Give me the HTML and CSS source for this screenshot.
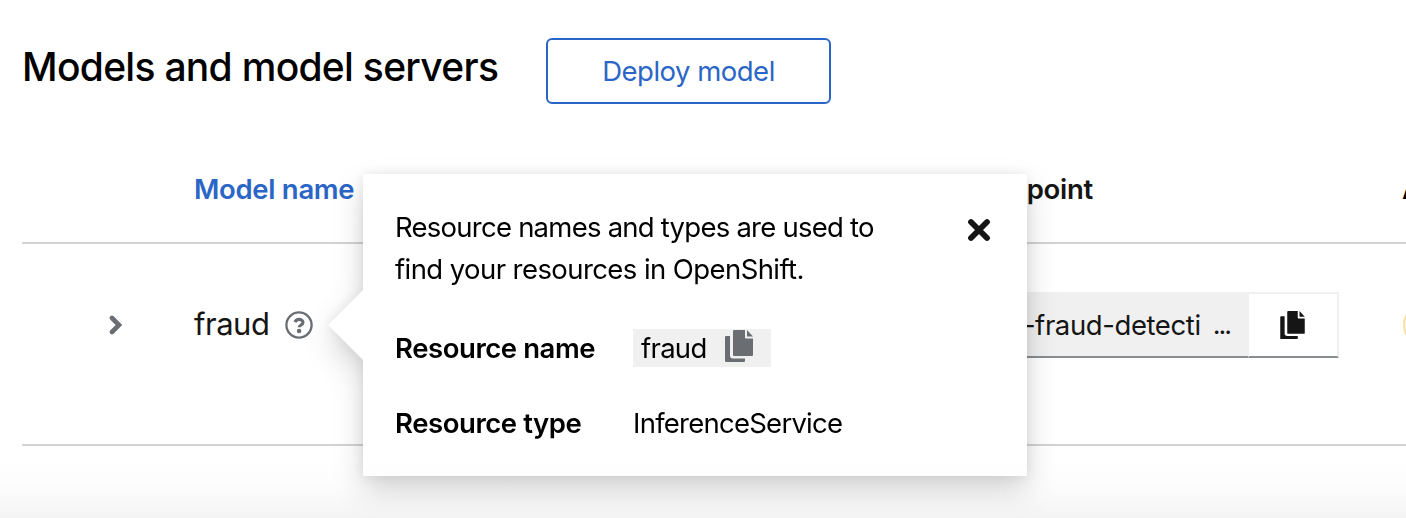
FILE: index.html
```html
<!DOCTYPE html>
<html lang="en">
<head>
<meta charset="utf-8">
<title>Models and model servers</title>
<link rel="stylesheet" href="styles.css">
</head>
<body>
<svg class="symbols" aria-hidden="true">
  <symbol id="copy" viewBox="0 0 28 32">
    <path d="M5 6v19.500a3 3 0 0 0 3 3h12V31a1 1 0 0 1-1 1H1a1 1 0 0 1-1-1V7a1 1 0 0 1 1-1zM9 0h11v7.500a1 1 0 0 0 1 1h7V25a1 1 0 0 1-1 1H9a1 1 0 0 1-1-1V1a1 1 0 0 1 1-1zM22 0l6 6.500h-6z"/>
  </symbol>
</svg>
<main class="page">
  <header class="toolbar">
    <h1 class="title"><span>Models and model servers</span></h1>
    <button class="deploy"><span>Deploy model</span></button>
  </header>
  <section class="table">
    <div class="row head">
      <div class="cell name sort"><span>Model name</span></div>
      <div class="cell endpoint-title"><span>Inference endpoint</span></div>
      <div class="cell api"><span>API protocol</span></div>
    </div>
    <div class="row model">
      <div class="cell toggle">
        <svg width="14" height="20" viewBox="0 0 14 20"><path d="M3 3l7 7-7 7" fill="none" stroke="#6a6e73" stroke-width="4.600" stroke-linecap="round" stroke-linejoin="miter"/></svg>
      </div>
      <div class="cell name model-name"><span class="model-text">fraud</span>
        <div class="help">
          <svg width="28" height="28" viewBox="0 0 28 28"><circle cx="14" cy="14" r="12.600" fill="none" stroke="#6a6e73" stroke-width="2.300"/><path d="M10 11.200c.8-1.900 2.200-2.800 4-2.800 2.200 0 4 1.200 4 3.100 0 2.500-3.800 2.400-3.800 4.700" fill="none" stroke="#6a6e73" stroke-width="3.100"/><circle cx="14.100" cy="20" r="2.300" fill="#6a6e73"/></svg>
          <aside class="popover">
            <svg class="arrow" width="36" height="72" viewBox="0 0 36 72"><path d="M36 0L0 36l36 36z" fill="#fff"/></svg>
            <div class="pop-body">
              <p class="pop-text"><span class="line1">Resource names and types are used to</span><br><span class="line2">find your resources in OpenShift.</span></p>
              <dl class="details">
                <dt><span>Resource name</span></dt>
                <dd><div class="clip"><span class="clip-text">fraud</span><svg width="28" height="32"><use href="#copy"/></svg></div></dd>
                <dt><span>Resource type</span></dt>
                <dd><span class="svc">InferenceService</span></dd>
              </dl>
              <svg class="close" width="24" height="24" viewBox="0 0 24 24"><path d="M4 4l16 16M20 4L4 20" stroke="#151515" stroke-width="5.800" stroke-linecap="round"/></svg>
            </div>
          </aside>
        </div>
      </div>
      <div class="cell endpoint">
        <div class="field"><span class="url">-fraud-detecti</span><span class="dots">...</span></div>
        <button class="copy"><svg width="25" height="28"><use href="#copy"/></svg></button>
      </div>
      <div class="cell api"><span class="badge">REST</span></div>
    </div>
  </section>
  <div class="fade"></div>
</main>
</body>
</html>
```
FILE: styles.css
```css
* { box-sizing: border-box; }
body {
  margin: 0;
  background: #fff;
  color: #151515;
  font: 28px/42px Inter, sans-serif;
  overflow: hidden;
}
h1, p, dl, dd { margin: 0; }
svg { display: block; flex: none; }
button { font: inherit; }
span { white-space: nowrap; }
.symbols { position: absolute; width: 0; height: 0; }
.page {
  position: relative;
  height: 518px;
  padding: 38px 0 0 22px;
  overflow: hidden;
}
.toolbar { display: flex; height: 66px; align-items: center; }
.title {
  width: 524px;
  font-size: 39px;
  line-height: 52px;
  font-weight: 500;
  letter-spacing: -.71px;
  color: #000;
  padding-bottom: 8px;
}
.deploy {
  width: 285px;
  height: 66px;
  padding: 0;
  border: 2px solid #2b66c6;
  border-radius: 6px;
  background: #fff;
  color: #2b66c6;
  font-size: 27.500px;
  letter-spacing: -.5px;
}
.table { padding-top: 34px; }
.row {
  display: grid;
  grid-template-columns: 172px 654px 518px 200px;
  border-bottom: 2px solid #d2d2d2;
  width: 1544px;
}
.head {
  height: 106px;
  padding-bottom: 2px;
  align-items: center;
  font-size: 27.500px;
  font-weight: 600;
  letter-spacing: -.3px;
}
.name { grid-column: 2; }
.sort { color: #2b66c6; }
.model { height: 202px; }
.toggle { padding: 71px 0 0 87px; }
.model-name { display: flex; gap: 16px; padding-top: 59px; }
.model-text { font-size: 31px; width: 75px; letter-spacing: -.5px; }
.help { position: relative; padding-top: 8px; }
.endpoint { display: flex; height: 66px; margin-top: 48px; width: 491px; }
.field {
  flex: 1;
  display: flex;
  justify-content: flex-end;
  align-items: center;
  gap: 12px;
  padding: 2px 18px 0 0;
  background: #f0f0f0;
  border-bottom: 2px solid #8a8d90;
}
.url { font-size: 27.500px; letter-spacing: -.4px; }
.dots { font-size: 27px; letter-spacing: -2px; }
.copy {
  width: 91px;
  display: flex;
  justify-content: center;
  align-items: center;
  padding: 0 1px 0 0;
  background: #fff;
  border: 2px solid #f0f0f0;
  border-left-width: 1px;
  border-bottom-color: #8a8d90;
  color: #151515;
}
.copy svg { fill: #151515; }
.api { padding-left: 37px; }
.endpoint-title { margin-left: -1px; }
.head .api { color: #000; padding-left: 36px; }
.badge {
  display: block;
  width: 110px;
  height: 46px;
  margin-top: 58px;
  border: 2px solid #f9e0a2;
  border-radius: 23px;
  background: #fdf7e7;
  text-align: center;
}
.popover {
  position: absolute;
  z-index: 2;
  left: 78px;
  top: -129px;
  width: 664px;
  height: 302px;
  background: #fff;
  color: #000;
  filter: drop-shadow(0 14px 15px rgba(3, 3, 3, .16)) drop-shadow(0 0 6px rgba(3, 3, 3, .08));
}
.arrow { position: absolute; left: -35px; top: 115px; }
.pop-body { padding: 32px; font-size: 27.500px; }
.line1 { letter-spacing: -.76px; }
.line2 { letter-spacing: -.58px; }
.close { position: absolute; right: 36px; top: 44px; }
.details {
  display: grid;
  grid-template-columns: 238px 1fr;
  row-gap: 33px;
  margin-top: 37px;
}
.details dt { font-weight: 600; letter-spacing: -.43px; }
.svc { letter-spacing: -.75px; }
.clip {
  display: flex;
  width: 138px;
  height: 38px;
  margin-top: 2px;
  padding: 1px 0 0 8px;
  background: #f0f0f0;
  line-height: 37px;
}
.clip-text { width: 84px; letter-spacing: -.7px; }
.clip svg { fill: #6a6e73; }
.fade {
  position: absolute;
  z-index: 3;
  left: 0;
  right: 0;
  bottom: 0;
  height: 60px;
  background: linear-gradient(transparent, rgba(0, 0, 0, .012) 50%, rgba(0, 0, 0, .045));
}
```
